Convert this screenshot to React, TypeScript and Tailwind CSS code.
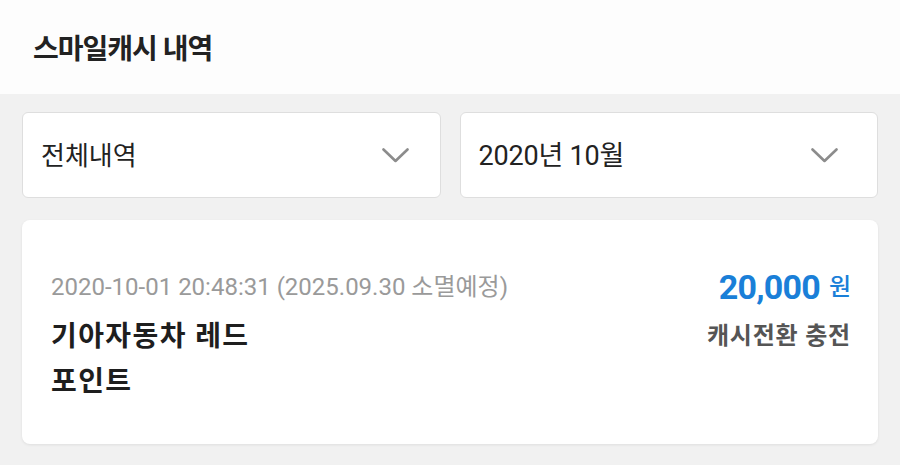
const Chevron = () => (
  <svg width="27" height="15" viewBox="0 0 27 15" fill="none">
    <path d="M1.5 1.5 L13.5 13 L25.5 1.5" stroke="#8c8c8c" strokeWidth="2.6" strokeLinecap="round" strokeLinejoin="round" />
  </svg>
);

const font = "font-['Roboto','Noto_Sans_CJK_KR',sans-serif]";

export default function App() {
  return (
    <div className={`w-[900px] h-[465px] bg-[#f1f1f1] ${font} overflow-hidden`}>
      {/* Header */}
      <div className="h-[94px] bg-[#fdfdfd] flex items-center pl-[33px]">
        <h1 className="text-[28px] font-semibold text-[#222] tracking-[-1px] pt-[6px]">스마일캐시 내역</h1>
      </div>

      {/* Filters */}
      <div className="grid grid-cols-2 gap-[19px] px-[22px] pt-[18px]">
        <button className="h-[86px] bg-white border border-[#dedede] rounded-[6px] flex items-center justify-between pl-[18px] pr-[31px]">
          <span className="text-[26px] text-[#222] pt-[2px]">전체내역</span>
          <Chevron />
        </button>
        <button className="h-[86px] bg-white border border-[#dedede] rounded-[6px] flex items-center justify-between pl-[18px] pr-[39px]">
          <span className="text-[27px] text-[#222] tracking-[-0.2px] pt-[2px]">2020년 10월</span>
          <Chevron />
        </button>
      </div>

      {/* History card */}
      <div className="mx-[22px] mt-[22px] h-[224px] bg-white rounded-[8px] shadow-[0_1px_3px_rgba(0,0,0,0.08)] pl-[29px] pr-[27px] pt-[48px] flex justify-between">
        <div className="flex flex-col">
          <span className="text-[24px] leading-[38px] text-[#9a9a9a]">
            2020-10-01 20:48:31 (2025.09.30 소멸예정)
          </span>
          <span className="mt-[8px] text-[28px] leading-[45px] font-bold text-[#1e1e1e] tracking-[1.4px]">
            기아자동차 레드
            <br />
            포인트
          </span>
        </div>
        <div className="flex flex-col items-end">
          <div className="h-[38px] flex items-center">
            <span className="text-[34px] font-bold text-[#1a7fd8] tracking-[-0.8px]">20,000</span>
            <span className="ml-[9px] text-[24px] text-[#1a7fd8] font-medium">원</span>
          </div>
          <span className="mt-[8px] text-[24px] leading-[45px] font-semibold text-[#555] tracking-[0.8px]">캐시전환 충전</span>
        </div>
      </div>
    </div>
  );
}
